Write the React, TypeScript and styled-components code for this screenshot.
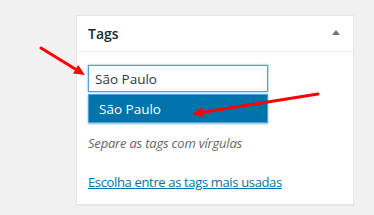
import React from 'react';
import styled, { createGlobalStyle } from 'styled-components';

const GlobalStyle = createGlobalStyle`
  body {
    margin: 0;
    background: #f1f1f1;
    font-family: 'Open Sans', 'Noto Sans', sans-serif;
    color: #23282d;
  }
`;

const Page = styled.div`
  position: relative;
  width: 374px;
  height: 215px;
  overflow: hidden;
  padding: 15px 0 0 76px;
  box-sizing: border-box;
`;

const Postbox = styled.div`
  width: 278px;
  height: 190px;
  box-sizing: border-box;
  background: #fff;
  border: 1px solid #e5e5e5;
  box-shadow: 0 1px 1px rgba(0, 0, 0, 0.04);
`;

const Header = styled.div`
  display: flex;
  align-items: center;
  justify-content: space-between;
  height: 35px;
  padding: 0 13px 0 11px;
  border-bottom: 1px solid #eee;
`;

const Title = styled.h2`
  margin: 0;
  font-size: 14px;
  font-weight: 600;
  line-height: 1;
`;

const Toggle = styled.span`
  width: 0;
  height: 0;
  border-left: 4px solid transparent;
  border-right: 4px solid transparent;
  border-bottom: 5px solid #72777c;
  margin-top: -2px;
`;

const Inside = styled.div`
  padding: 13px 11px 0;
  display: flex;
  flex-direction: column;
`;

const TagInput = styled.div`
  width: 180px;
  height: 27px;
  box-sizing: border-box;
  border: 1px solid #5b9dd9;
  box-shadow: 0 0 2px rgba(30, 140, 190, 0.8);
  padding: 0 6px;
  display: flex;
  align-items: center;
  font-size: 13.5px;
  color: #32373c;
`;

const Suggest = styled.ul`
  list-style: none;
  margin: 2px 0 0;
  padding: 0;
  width: 180px;
  box-sizing: border-box;
  border: 1px solid #5b9dd9;
  box-shadow: 0 1px 2px rgba(30, 140, 190, 0.6);
`;

const SuggestItem = styled.li<{ $active?: boolean }>`
  height: 27px;
  display: flex;
  align-items: center;
  padding: 0 10px;
  font-size: 13.5px;
  background: ${(p) => (p.$active ? '#0073aa' : '#fff')};
  color: ${(p) => (p.$active ? '#fff' : '#32373c')};
`;

const Howto = styled.p`
  margin: 10px 0 0;
  font-size: 13px;
  font-style: italic;
  letter-spacing: -0.2px;
  color: #666;
  line-height: 20px;
`;

const TagCloudLink = styled.a`
  margin-top: 19px;
  font-size: 13px;
  letter-spacing: -0.35px;
  color: #0073aa;
  text-decoration: underline;
  line-height: 20px;
  align-self: flex-start;
`;

const Annotations = styled.svg`
  position: absolute;
  left: 0;
  top: 0;
  pointer-events: none;
`;

function Arrow({ x1, y1, x2, y2 }: { x1: number; y1: number; x2: number; y2: number }) {
  const a = Math.atan2(y2 - y1, x2 - x1);
  const len = 11;
  const w = 5;
  const bx = x2 - len * Math.cos(a);
  const by = y2 - len * Math.sin(a);
  const px = -Math.sin(a) * w;
  const py = Math.cos(a) * w;
  return (
    <g>
      <line x1={x1} y1={y1} x2={bx} y2={by} stroke="#f00" strokeWidth={3} strokeLinecap="round" />
      <polygon points={`${x2},${y2} ${bx + px},${by + py} ${bx - px},${by - py}`} fill="#f00" />
    </g>
  );
}

export default function App() {
  return (
    <>
      <GlobalStyle />
      <Page>
        <Postbox>
          <Header>
            <Title>Tags</Title>
            <Toggle />
          </Header>
          <Inside>
            <TagInput>São Paulo</TagInput>
            <Suggest>
              <SuggestItem $active>São Paulo</SuggestItem>
            </Suggest>
            <Howto>Separe as tags com vírgulas</Howto>
            <TagCloudLink href="#">Escolha entre as tags mais usadas</TagCloudLink>
          </Inside>
        </Postbox>
        <Annotations width={374} height={215}>
          <Arrow x1={41} y1={48} x2={85} y2={75} />
          <Arrow x1={318} y1={94} x2={192} y2={114} />
        </Annotations>
      </Page>
    </>
  );
}
